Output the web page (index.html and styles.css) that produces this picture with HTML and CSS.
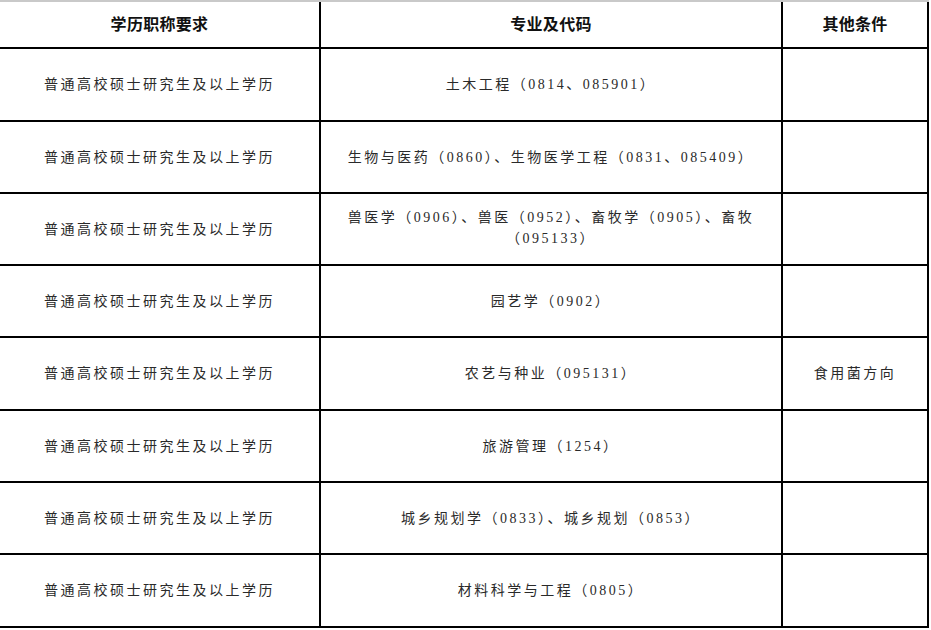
FILE: index.html
```html
<!DOCTYPE html>
<html lang="zh-CN">
<head>
<meta charset="utf-8">
<title>岗位要求</title>
<link rel="stylesheet" href="styles.css">
</head>
<body>
<div class="sheet">
  <div class="row head">
    <div class="cell c1">学历职称要求</div>
    <div class="cell c2">专业及代码</div>
    <div class="cell c3">其他条件</div>
  </div>
  <div class="row r73">
    <div class="cell c1">普通高校硕士研究生及以上学历</div>
    <div class="cell c2">土木工程（0814、085901）</div>
    <div class="cell c3"></div>
  </div>
  <div class="row r72">
    <div class="cell c1">普通高校硕士研究生及以上学历</div>
    <div class="cell c2">生物与医药（0860）、生物医学工程（0831、085409）</div>
    <div class="cell c3"></div>
  </div>
  <div class="row r72">
    <div class="cell c1">普通高校硕士研究生及以上学历</div>
    <div class="cell c2 two">兽医学（0906）、兽医（0952）、畜牧学（0905）、畜牧<br>（095133）</div>
    <div class="cell c3"></div>
  </div>
  <div class="row r72">
    <div class="cell c1">普通高校硕士研究生及以上学历</div>
    <div class="cell c2">园艺学（0902）</div>
    <div class="cell c3"></div>
  </div>
  <div class="row r73">
    <div class="cell c1">普通高校硕士研究生及以上学历</div>
    <div class="cell c2">农艺与种业（095131）</div>
    <div class="cell c3">食用菌方向</div>
  </div>
  <div class="row r72">
    <div class="cell c1">普通高校硕士研究生及以上学历</div>
    <div class="cell c2">旅游管理（1254）</div>
    <div class="cell c3"></div>
  </div>
  <div class="row r72">
    <div class="cell c1">普通高校硕士研究生及以上学历</div>
    <div class="cell c2">城乡规划学（0833）、城乡规划（0853）</div>
    <div class="cell c3"></div>
  </div>
  <div class="row r73">
    <div class="cell c1">普通高校硕士研究生及以上学历</div>
    <div class="cell c2">材料科学与工程（0805）</div>
    <div class="cell c3"></div>
  </div>
</div>
</body>
</html>
```

FILE: styles.css
```css
html, body {
  margin: 0;
  padding: 0;
  background: #ffffff;
}
body {
  width: 931px;
  height: 630px;
  overflow: hidden;
  font-family: "Liberation Serif", "Noto Sans CJK SC", serif;
  color: #2a2a2a;
}
.sheet {
  border-top: 2px solid #c9c9c9;
  width: 929px;
}
.row {
  display: flex;
  border-bottom: 2px solid #000;
  box-sizing: border-box;
}
.head { height: 47px; }
.r73 { height: 73px; }
.r72 { height: 72px; }
.cell {
  display: flex;
  align-items: center;
  justify-content: center;
  text-align: center;
  border-right: 2px solid #000;
  font-size: 14px;
  letter-spacing: 2.5px;
  font-weight: 400;
  line-height: 21px;
}
.head .cell {
  font-size: 16px;
  font-weight: 700;
  letter-spacing: 0.3px;
  color: #111;
}
.c1 { width: 321px; box-sizing: border-box; }
.c2 { width: 462px; box-sizing: border-box; }
.c3 { width: 146px; box-sizing: border-box; }
.two { padding-bottom: 2px; }
```
